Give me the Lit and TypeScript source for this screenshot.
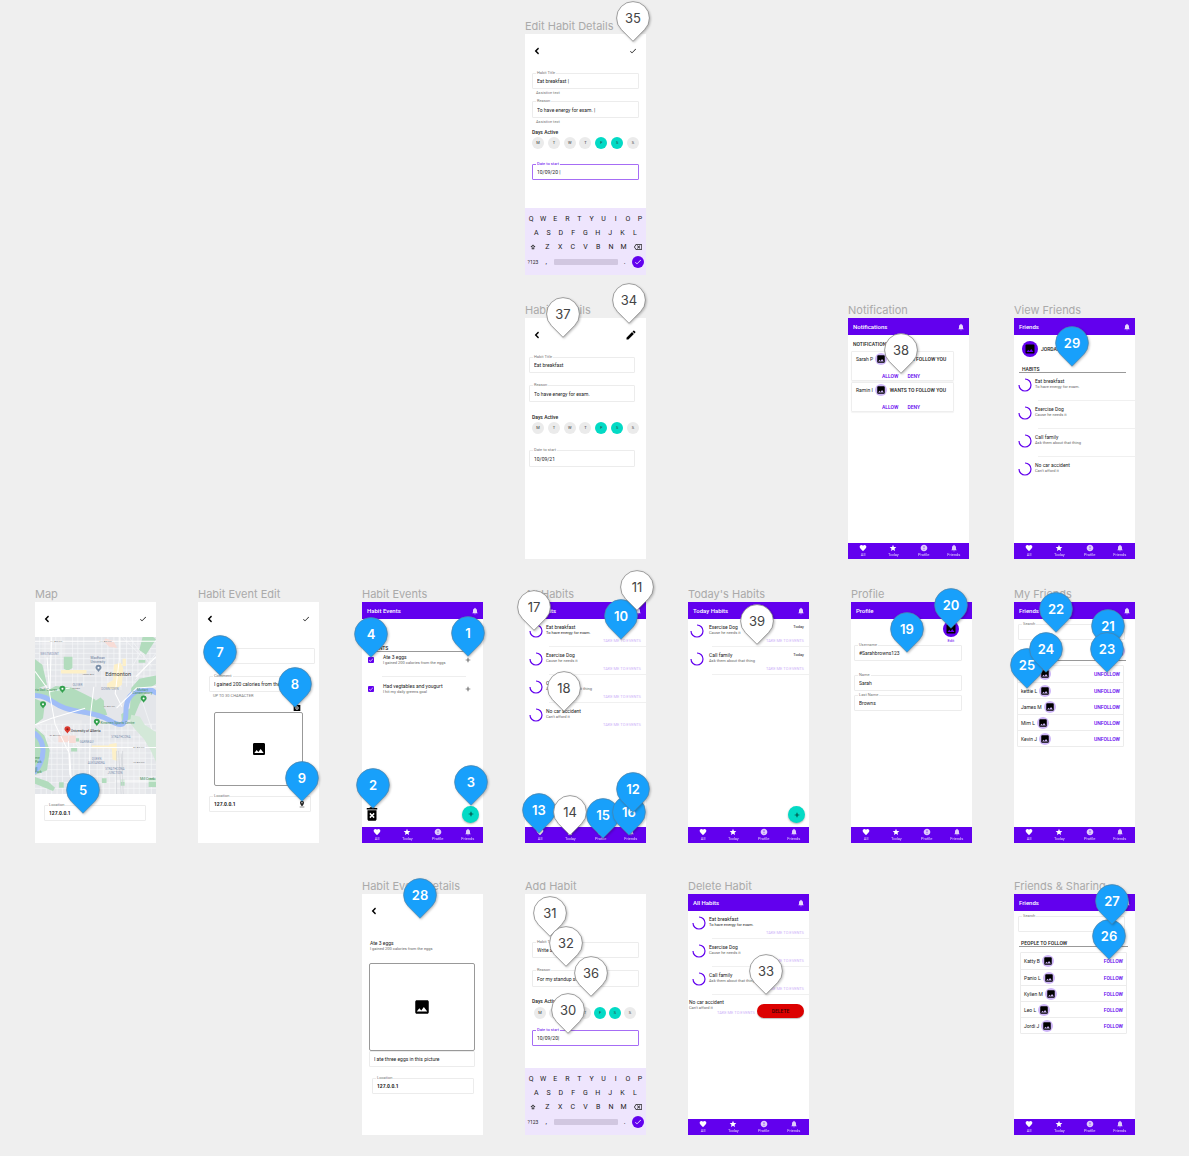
import { LitElement, html, svg, css, nothing } from "lit";
import type { TemplateResult } from "lit";
import { customElement } from "lit/decorators.js";
import { classMap } from "lit/directives/class-map.js";

const ICONS: Record<string, string> = {
  back: "M16 7.41 14.200 5.200 7.400 12l6.800 6.800L16 16.590 11.400 12z",
  check: "M9 16.17 4.83 12l-1.42 1.41L9 19 21 7l-1.41-1.41z",
  add: "M19 13h-6v6h-2v-6H5v-2h6V5h2v6h6z",
  edit: "M3 17.25V21h3.75L17.81 9.94l-3.75-3.75L3 17.25zM20.71 7.04c.39-.39.39-1.02 0-1.41l-2.34-2.34c-.39-.39-1.02-.39-1.41 0l-1.83 1.83 3.75 3.75 1.83-1.83z",
  bell: "M12 22c1.1 0 2-.9 2-2h-4c0 1.1.89 2 2 2zm6-6v-5c0-3.07-1.64-5.64-4.5-6.32V4c0-.83-.67-1.5-1.5-1.5s-1.5.67-1.5 1.5v.68C7.63 5.36 6 7.92 6 11v5l-2 2v1h16v-1l-2-2z",
  heart: "M12 21.35l-1.45-1.32C5.4 15.36 2 12.28 2 8.5 2 5.42 4.42 3 7.5 3c1.74 0 3.41.81 4.5 2.09C13.09 3.81 14.76 3 16.5 3 19.58 3 22 5.42 22 8.5c0 3.78-3.4 6.86-8.55 11.54L12 21.35z",
  star: "M12 17.27 18.18 21l-1.64-7.03L22 9.24l-7.19-.61L12 2 9.19 8.63 2 9.24l5.46 4.73L5.82 21z",
  alert: "M12 2C6.48 2 2 6.48 2 12s4.48 10 10 10 10-4.48 10-10S17.52 2 12 2zm1 15h-2v-2h2v2zm0-4h-2V7h2v6z",
  image: "M21 19V5c0-1.1-.9-2-2-2H5c-1.1 0-2 .9-2 2v14c0 1.1.9 2 2 2h14c1.1 0 2-.9 2-2zM8.5 13.5l2.5 3.01L14.5 12l4.5 6H5l3.5-4.5z",
  trash: "M6 19c0 1.1.9 2 2 2h8c1.1 0 2-.9 2-2V7H6v12zm2.46-7.12 1.41-1.41L12 12.59l2.12-2.12 1.41 1.41L13.41 14l2.12 2.12-1.41 1.41L12 15.41l-2.12 2.12-1.41-1.41L10.59 14l-2.13-2.12zM15.5 4l-1-1h-5l-1 1H5v2h14V4z",
  camera: "M2 3h6l1-1h6l1 1h6v18H2zM12 7a5 5 0 1 0 0 10 5 5 0 0 0 0-10zm0 2.500a2.500 2.500 0 1 1 0 5 2.500 2.500 0 0 1 0-5z",
  place: "M18 8c0-3.31-2.69-6-6-6S6 4.690 6 8c0 4.500 6 11 6 11s6-6.500 6-11zm-8 0c0-1.100.900-2 2-2s2 .900 2 2-.890 2-2 2c-1.100 0-2-.900-2-2zM5 20v2h14v-2H5z",
  shift: "M12 2 2 12h5v9h10v-9h5zM12 6l4 4h-2v8h-4v-8H8z",
  erase: "M22 3H7c-.690 0-1.230.350-1.590.880L0 12l5.410 8.110c.360.530.900.890 1.590.890h15c1.100 0 2-.900 2-2V5c0-1.100-.900-2-2-2zm0 16H7.070L2.400 12l4.660-7H22v14zm-11.590-2L14 13.410 17.590 17 19 15.590 15.410 12 19 8.410 17.590 7 14 10.590 10.410 7 9 8.410 12.590 12 9 15.590z",
};

const icon = (name: string, size = "") => html`
  <svg class="icon ${size}" viewBox="0 0 24 24" aria-hidden="true">${svg`<path d=${ICONS[name]}></path>`}</svg>
`;

const iconButton = (name: string, label: string, size = "") => html`
  <button class="plain" type="button" aria-label=${label}>${icon(name, size)}</button>
`;

interface FieldOptions {
  label?: string;
  value?: string;
  kind?: string;
}

const field = (id: string, { label = "", value = "", kind = "" }: FieldOptions) => html`
  <div class="field ${kind}">
    ${label ? html`<label for=${id}>${label}</label>` : nothing}
    <input id=${id} type="text" .value=${value} aria-label=${label || id} />
    ${kind.includes("with-place") ? icon("place", "s8") : nothing}
  </div>
`;

const appBar = (title: string, bell = true) => html`
  <header class="app-bar">
    <span>${title}</span>
    ${bell ? iconButton("bell", "Notifications", "s8") : nothing}
  </header>
`;

const plainBar = (action = "") => html`
  <header class="plain-bar">
    ${iconButton("back", "Back", "s12")}
    ${action ? iconButton(action, action, action === "edit" ? "s12" : "s8") : nothing}
  </header>
`;

const NAV = [
  ["heart", "All"],
  ["star", "Today"],
  ["alert", "Profile"],
  ["bell", "Friends"],
];

const navBar = () => html`
  <nav class="nav-bar">
    ${NAV.map(
      ([glyph, label], i) => html`
        <button class=${classMap({ plain: true, dim: i > 1 })} type="button">
          ${icon(glyph, "s8")}<span>${label}</span>
        </button>
      `,
    )}
  </nav>
`;

const ring = () => html`
  <svg class="ring" viewBox="0 0 14 14" aria-hidden="true">
    ${svg`<path d="M7 1A6 6 0 1 1 1 7"></path>`}
  </svg>
`;

interface Habit {
  title: string;
  note: string;
  link?: boolean;
  today?: boolean;
  strong?: boolean;
}

const habitRow = (habit: Habit) => html`
  <li class="habit">
    ${ring()}
    <div class="habit-text">
      <p class="title">${habit.title}</p>
      <p class=${classMap({ note: true, strong: !!habit.strong })}>${habit.note}</p>
    </div>
    <div class="habit-side">
      <span>${habit.today ? "Today" : ""}</span>
      ${habit.link ? html`<a class="events-link" href="#events">TAKE ME TO EVENTS</a>` : nothing}
    </div>
  </li>
`;

const HABITS: Habit[] = [
  { title: "Eat breakfast", note: "To have energy for exam." },
  { title: "Exercise Dog", note: "Cause he needs it" },
  { title: "Call family", note: "Ask them about that thing" },
  { title: "No car accident", note: "Can't afford it" },
];

const days = () => html`
  <p class="days-title">Days Active</p>
  <div class="days">
    ${["M", "T", "W", "T", "F", "S", "S"].map(
      (d, i) => html`<button class=${classMap({ day: true, on: i === 4 || i === 5 })} type="button">${d}</button>`,
    )}
  </div>
`;

interface HabitFormData {
  id: string;
  variant: string;
  title: string;
  reason: string;
  date: string;
  helper?: boolean;
  focus?: boolean;
}

const habitForm = (f: HabitFormData) => html`
  <form class="form ${f.variant}">
    <div class="block">
      ${field(`${f.id}-title`, { label: "Habit Title", value: f.title })}
      ${f.helper ? html`<p class="helper">Assistive text</p>` : nothing}
    </div>
    <div class="block second">
      ${field(`${f.id}-reason`, { label: "Reason", value: f.reason, kind: "tall" })}
      ${f.helper ? html`<p class="helper">Assistive text</p>` : nothing}
    </div>
    ${days()}
    <div class="date">
      ${field(`${f.id}-date`, { label: "Date to start", value: f.date, kind: f.focus ? "focus" : "tall" })}
    </div>
  </form>
`;

const keyRow = (letters: string) =>
  [...letters].map((c) => html`<button class="key" type="button">${c}</button>`);

const keyboard = () => html`
  <div class="keyboard">
    <div class="keys">${keyRow("QWERTYUIOP")}</div>
    <div class="keys inset">${keyRow("ASDFGHJKL")}</div>
    <div class="keys">
      <button class="key wide" type="button" aria-label="Shift">${icon("shift", "s6")}</button>
      ${keyRow("ZXCVBNM")}
      <button class="key wide" type="button" aria-label="Delete">${icon("erase", "s8")}</button>
    </div>
    <div class="keys last">
      <button class="key small" type="button">?123</button>
      <button class="key" type="button">,</button>
      <button class="key space" type="button" aria-label="Space"></button>
      <button class="key" type="button">.</button>
      <button class="key done" type="button" aria-label="Done">${icon("check", "s8")}</button>
    </div>
  </div>
`;

const avatar = (kind = "") => html`<span class="avatar ${kind}">${icon("image", kind ? "s12" : "s10")}</span>`;

const people = (names: string[], action: string, kind = "") => html`
  <ul class="people ${kind}">
    ${names.map(
      (n) => html`
        <li class="person">
          <span>${n}</span>${avatar()}
          <button class="plain caps violet" type="button">${action}</button>
        </li>
      `,
    )}
  </ul>
`;

const request = (name: string) => html`
  <article class="request">
    <div class="request-top"><span>${name}</span>${avatar()}<b class="caps">WANTS TO FOLLOW YOU</b></div>
    <div class="request-actions">
      <button class="plain caps violet" type="button">ALLOW</button>
      <button class="plain caps violet" type="button">DENY</button>
    </div>
  </article>
`;

const fab = () => html`<button class="fab" type="button" aria-label="Add">${icon("add", "s8")}</button>`;

const eventRow = (id: string, title: string, note: string) => html`
  <li class="event">
    <span class="tick"><input type="checkbox" id=${id} checked />${icon("check", "s6")}</span>
    <label class="event-text" for=${id}><span class="title">${title}</span><span class="note">${note}</span></label>
    ${iconButton("add", "Add", "s8")}
  </li>
`;

/* City map, drawn three units to the pixel. */
const MINOR_V = [14, 30, 46, 62, 78, 112, 128, 146, 182, 200, 218, 236, 256, 274, 292, 308, 326, 344];
const MINOR_H = [22, 36, 50, 66, 84, 100, 118, 136, 262, 280, 300, 318, 348, 364, 382, 398, 418, 436, 454];
const LABELS: [number, number, string, string][] = [
  [16, 54, "area", "WESTMOUNT"],
  [166, 68, "poi", "MacEwan"],
  [166, 79, "poi", "University"],
  [112, 148, "area", "OLIVER"],
  [198, 160, "area", "DOWNTOWN"],
  [0, 162, "park", "ria Golf Course"],
  [305, 162, "park", "Muttart"],
  [292, 173, "park", "Conservatory"],
  [196, 261, "park", "Kinsmen Sports Centre"],
  [228, 304, "area", "STRATHCONA"],
  [134, 318, "area", "GARNEAU"],
  [170, 369, "area", "QUEEN"],
  [158, 380, "area", "ALEXANDRA"],
  [210, 400, "area", "STRATHCONA"],
  [218, 411, "area", "JUNCTION"],
  [314, 430, "park", "Mill Creek"],
  [0, 366, "park", "me"],
  [0, 377, "park", "Park"],
  [0, 398, "park", "ill"],
  [0, 409, "park", "Park"],
  [44, 16, "road", "111 Ave NW"],
  [192, 16, "road", "111 Ave NW"],
  [142, 114, "road", "Jasper Ave"],
  [110, 156, "road", "100 Ave"],
  [206, 211, "road", "97 Ave NW"],
  [44, 296, "road", "87 Ave NW"],
  [294, 334, "road", "82 Ave NW"],
  [294, 379, "road", "76 Ave NW"],
];
const marker = (x: number, y: number, kind: string) =>
  svg`<path class=${kind} d="M${x} ${y + 11}C${x - 3} ${y + 5} ${x - 9} ${y + 3} ${x - 9} ${y - 2}A9 9 0 1 1 ${x + 9} ${y - 2}C${x + 9} ${y + 3} ${x + 3} ${y + 5} ${x} ${y + 11}Z"></path>
    <circle cx=${x} cy=${y - 2} r="3" class="hole ${kind}"></circle>`;

const cityMap = () => html`
  <svg class="map" viewBox="0 0 362 472" preserveAspectRatio="xMidYMid slice" role="img" aria-label="Map of Edmonton">
    ${svg`
      <rect class="land" width="362" height="472"></rect>
      <g class="pale">
        <path d="M0 250H140V340H0zM190 310H330V470H190zM20 0H90V60H20zM200 90H260V160H200z"></path>
      </g>
      <g class="minor">
        ${MINOR_V.map((x) => svg`<path d="M${x} 0V150M${x + 4} 262V472"></path>`)}
        ${MINOR_H.map((y) => svg`<path d="M0 ${y}H362"></path>`)}
        <path d="M260 0l60 60M280 0l70 90M300 130l62-80M320 190l30 90M340 10l-50 80M90 270l40 60M0 260l60 60"></path>
      </g>
      <g class="green">
        <path d="M322 0h30l10 8-30 46-20-14z"></path>
        <path d="M86 60h26v34l-14 8-12-6z"></path>
        <path d="M0 68l22 16 14 60-36 14z"></path>
        <path d="M0 152l40 8 22-12 46 4 40 20 32 16 10 24 20 4 6 18-30 8-70-16-46-24-30-20-44-10z"></path>
        <path d="M174 196l22-14 10 10 2 40-22 12-12-14z"></path>
        <path d="M258 232l26-18 4-60 24-28 50-10v26l-26 16-24 44-18 44-34 8z"></path>
        <path d="M0 186l30 12-6 46-24 20zM0 272l28 24 16 44-8 60-36 14z"></path>
        <path d="M0 420l40 14 20 18-6 10-54-22z"></path>
        <path d="M108 330h18v14h-18zM122 304h10v10h-10zM72 436h14v16H72zM200 424h14v14h-14zM256 428h12v18h-12zM154 444h8v12h-8zM340 424h22v26h-22zM310 70h20v8h-20z"></path>
      </g>
      <path class="ravine" d="M288 234l26 6 14 24 34 22v88l-16-34-20-34-24-26-18-22z"></path>
      <g class="yellow">
        <path d="M78 100h76v10H78zM236 84l20-6 8 16-4 50-20 14-24-4v-14l18-10zM262 66h10v22h-10zM222 322l22-4 2 54-14-4-2-32-8-4zM170 326h72v8h-72z"></path>
      </g>
      <g class="pink">
        <path d="M210 6l24 6 12 22-24-4-16-16zM102 296h20v22h-20zM70 296h30v20H70z"></path>
      </g>
      <g class="river">
        <path d="M0 176c44 2 50 24 90 38s90 10 132 36 50 12 50-24 14-62 50-66 30 6 40 8"></path>
        <path d="M0 290c30 24 34 72 0 114"></path>
      </g>
      <g class="major">
        <path d="M0 14H362M0 332H362M36 62l8 110 16 90 44 90 4 70M176 150l-10 84-4 238M50 0l-6 172M100 312l4 100 30 60M252 0v70l-12 100 20 40M0 104l44 60 60-10M150 214l-100 30-50 20M244 214l60-60 58-4M362 60l-60 60M362 432H240"></path>
      </g>
      <g class="rail"><path d="M244 342v130M250 342l8 130M258 350l6 122M262 342v60"></path></g>
      ${LABELS.map(([x, y, kind, text]) => svg`<text class=${kind} x=${x} y=${y}>${text}</text>`)}
      <text class="city" x="210" y="118">Edmonton</text>
      ${marker(82, 158, "go")}${marker(24, 204, "go")}${marker(185, 257, "go")}${marker(325, 187, "go")}
      ${marker(190, 95, "school")}${marker(97, 279, "red")}
      <text class="uni" x="107" y="286">University of Alberta</text>
    `}
  </svg>
`;

interface Board {
  title: string;
  x: number;
  y: number;
  body: () => TemplateResult;
}

const BOARDS: Board[] = [
  {
    title: "Edit Habit Details", x: 525, y: 34,
    body: () => html`${plainBar("check")}
      ${habitForm({ id: "edit", variant: "edit", title: "Eat breakfast |", reason: "To have energy for exam. |", date: "10/09/20 |", helper: true, focus: true })}
      ${keyboard()}`,
  },
  {
    title: "Habit Details", x: 525, y: 318,
    body: () => html`${plainBar("edit")}
      ${habitForm({ id: "view", variant: "view", title: "Eat breakfast", reason: "To have energy for exam.", date: "10/09/21" })}`,
  },
  {
    title: "Notification", x: 848, y: 318,
    body: () => html`${appBar("Notifications")}
      <h3 class="caps requests-title">NOTIFICATIONS</h3>
      <div class="requests">${request("Sarah P")}${request("Ramin I")}</div>
      ${navBar()}`,
  },
  {
    title: "View Friends", x: 1014, y: 318,
    body: () => html`${appBar("Friends")}
      <div class="friend-head">${avatar("solid")}<b class="caps">JORDAN</b></div>
      <h3 class="caps ruled">HABITS</h3>
      <ul class="habits">${HABITS.map(habitRow)}</ul>
      ${navBar()}`,
  },
  {
    title: "Map", x: 35, y: 602,
    body: () => html`${plainBar("check")}${cityMap()}
      <div class="map-field">${field("map-location", { label: "Location", value: "127.0.0.1", kind: "bold" })}</div>`,
  },
  {
    title: "Habit Event Edit", x: 198, y: 602,
    body: () => html`${plainBar("check")}
      <div class="event-edit">
        ${field("event-name", {})}
        <div class="comment">
          ${field("event-comment", { label: "Comment", value: "I gained 200 calories from the eggs" })}
          <p class="helper">UP TO 30 CHARACTER</p>
        </div>
        ${iconButton("camera", "Take a photo", "s8")}
        <div class="photo">${icon("image", "s16")}</div>
        ${field("event-location", { label: "Location", value: "127.0.0.1", kind: "bold with-place" })}
      </div>`,
  },
  {
    title: "Habit Events", x: 362, y: 602,
    body: () => html`${appBar("Habit Events")}
      <h3 class="caps ruled events-title">EVENTS</h3>
      <ul class="events">
        ${eventRow("event-1", "Ate 3 eggs", "I gained 200 calories from the eggs")}
        ${eventRow("event-2", "Had vegtables and yougurt", "I hit my daily greens goal")}
      </ul>
      <div class="actions">${iconButton("trash", "Delete", "s18")}${fab()}</div>
      ${navBar()}`,
  },
  {
    title: "All Habits", x: 525, y: 602,
    body: () => html`${appBar("All Habits")}
      <ul class="habits">${HABITS.map((h, i) => habitRow({ ...h, link: true, strong: i === 0 }))}</ul>
      ${navBar()}`,
  },
  {
    title: "Today's Habits", x: 688, y: 602,
    body: () => html`${appBar("Today Habits")}
      <ul class="habits near">${HABITS.slice(1, 3).map((h) => habitRow({ ...h, link: true, today: true }))}</ul>
      <div class="actions">${fab()}</div>
      ${navBar()}`,
  },
  {
    title: "Profile", x: 851, y: 602,
    body: () => html`${appBar("Profile", false)}
      <div class="profile">
        <div class="portrait">${avatar("solid")}<button class="plain violet" type="button">Edit</button></div>
        ${field("username", { label: "Username", value: "#Sarahbrowns123" })}
        <div class="names">
          ${field("first-name", { label: "Name", value: "Sarah" })}
          ${field("last-name", { label: "Last Name", value: "Browns" })}
        </div>
      </div>
      ${navBar()}`,
  },
  {
    title: "My Friends", x: 1014, y: 602,
    body: () => html`${appBar("Friends")}
      <div class="search">${field("search-friends", { label: "Search" })}</div>
      <div class="me">${avatar()}</div>
      ${people(["Katty B", "kettie L", "James M", "Mim L", "Kevin J"], "UNFOLLOW")}
      ${navBar()}`,
  },
  {
    title: "Habit Event Details", x: 362, y: 894,
    body: () => html`${plainBar()}
      <div class="event-details">
        <p class="title">Ate 3 eggs</p>
        <p class="note">I gained 200 calories from the eggs</p>
        <div class="photo large">${icon("image", "s18")}</div>
        ${field("caption", { value: "I ate three eggs in this picture" })}
        <div class="place-field">${field("details-location", { label: "Location", value: "127.0.0.1", kind: "bold" })}</div>
      </div>`,
  },
  {
    title: "Add Habit", x: 525, y: 894,
    body: () => html`<div class="plain-bar"></div>
      ${habitForm({ id: "add", variant: "add", title: "Write a book", reason: "For my standup skills", date: "10/09/20|", focus: true })}
      ${keyboard()}`,
  },
  {
    title: "Delete Habit", x: 688, y: 894,
    body: () => html`${appBar("All Habits")}
      <ul class="habits">
        ${HABITS.slice(0, 3).map((h, i) => habitRow({ ...h, link: true, strong: i === 0 }))}
        <li class="removing">
          <div>
            <p class="title">No car accident</p>
            <p class="note">Can't afford it</p>
            <a class="events-link" href="#events">TAKE ME TO EVENTS</a>
          </div>
          <button class="delete" type="button">DELETE</button>
        </li>
      </ul>
      ${navBar()}`,
  },
  {
    title: "Friends & Sharing", x: 1014, y: 894,
    body: () => html`${appBar("Friends")}
      <div class="search">${field("search-people", { label: "Search" })}</div>
      <h3 class="caps ruled people-title">PEOPLE TO FOLLOW</h3>
      ${people(["Katty B", "Panio L", "Kylien M", "Leo L", "Jordi J"], "FOLLOW", "follow")}
      ${navBar()}`,
  },
];

/* number, centre x, centre y, tone */
type Tone = "white" | "blue";
const PINS: [number, number, number, Tone][] = [
  [35, 633, 18, "white"], [34, 629, 300, "white"], [37, 563, 314, "white"], [38, 901, 350, "white"],
  [29, 1072, 343, "blue"], [5, 83, 790, "blue"], [7, 220, 652, "blue"], [8, 295, 684, "blue"],
  [9, 302, 778, "blue"], [4, 371, 634, "blue"], [1, 468, 633, "blue"], [2, 373, 785, "blue"],
  [3, 471, 782, "blue"], [17, 534, 607, "white"], [10, 621, 616, "blue"], [11, 637, 587, "white"],
  [18, 564, 688, "white"], [13, 539, 810, "blue"], [14, 570, 812, "white"], [15, 603, 815, "blue"],
  [16, 629, 812, "blue"], [12, 633, 789, "blue"], [39, 757, 621, "white"], [19, 907, 629, "blue"],
  [20, 951, 605, "blue"], [22, 1056, 609, "blue"], [21, 1108, 626, "blue"], [23, 1107, 649, "blue"],
  [25, 1027, 665, "blue"], [24, 1046, 649, "blue"], [28, 420, 895, "blue"], [31, 550, 913, "white"],
  [32, 566, 943, "white"], [36, 591, 973, "white"], [30, 568, 1010, "white"], [33, 766, 971, "white"],
  [26, 1109, 936, "blue"], [27, 1112, 901, "blue"],
];

@customElement("comment-pin")
export class CommentPin extends LitElement {
  static properties = { number: { type: Number }, tone: { type: String } };
  declare number: number;
  declare tone: Tone;

  static styles = css`
    :host { display: block; width: 34px; height: 42px; }
    button {
      display: grid; width: 34px; height: 42px; padding: 0; border: 0; background: none;
      font: 400 13px/34px Inter, "Liberation Sans", sans-serif; color: #444; cursor: pointer;
    }
    .blue { font-weight: 600; color: #fff; }
    svg, span { grid-area: 1 / 1; }
    svg { width: 34px; height: 42px; overflow: visible; filter: drop-shadow(1px 1px 1px rgb(0 0 0 / 25%)); }
    span { position: relative; text-align: center; }
    path { fill: #fff; stroke: #777; stroke-width: .7; }
    .blue path { fill: #18a0fb; stroke: #4d82a8; }
  `;

  render() {
    return html`
      <button class=${this.tone} type="button">
        <svg viewBox="0 0 34 42" aria-hidden="true">${svg`<path d="M17 40.300L5.400 28.600A16.400 16.400 0 1 1 28.600 28.600Z"></path>`}</svg>
        <span>${this.number}</span>
      </button>
    `;
  }
}

@customElement("app-root")
export class AppRoot extends LitElement {
  static styles = css`
    :host { display: block; }
    * { box-sizing: border-box; }
    p, h2, h3, ul { margin: 0; padding: 0; }
    li { list-style: none; }
    button, input { font: inherit; color: inherit; margin: 0; border-radius: 0; }
    .canvas {
      position: relative; min-height: 100vh; overflow: hidden; background: #efefef;
      font: 400 5px/6px Roboto, "Liberation Sans", sans-serif; color: #222;
    }
    .board { position: absolute; display: grid; grid-template-rows: 16px 241px; width: 121px; }
    .board h2 { font: 400 11px/16px Inter, "Liberation Sans", sans-serif; color: #aaa; white-space: nowrap; }
    .screen { display: flex; flex-direction: column; background: #fff; overflow: hidden; }
    comment-pin { position: absolute; }

    .icon { display: block; flex: none; width: 8px; height: 8px; fill: currentColor; fill-rule: evenodd; }
    .s6 { width: 6px; height: 6px; }
    .s10 { width: 10px; height: 10px; }
    .s12 { width: 12px; height: 12px; }
    .s16 { width: 16px; height: 16px; }
    .s18 { width: 18px; height: 18px; }
    .plain { display: block; padding: 0; border: 0; background: none; cursor: pointer; }
    .caps { font-weight: 500; font-size: 5px; }
    .violet { color: #6200ee; }

    .app-bar {
      display: flex; flex: none; align-items: center; justify-content: space-between; height: 17px;
      padding: 0 4px 0 5px; background: #6200ee; color: #fff; font-weight: 500; font-size: 6px;
    }
    .app-bar button { opacity: .85; }
    .plain-bar { display: flex; flex: none; align-items: center; justify-content: space-between; height: 34px; padding: 0 9px 0 6px; color: #000; }
    .nav-bar { display: grid; flex: none; grid-template-columns: repeat(4, 1fr); height: 16px; margin-top: auto; background: #6200ee; color: #fff; }
    .nav-bar button { display: flex; flex-direction: column; align-items: center; padding-top: 1px; font-size: 4px; line-height: 5px; }
    .nav-bar span { opacity: .8; }
    .dim .icon { opacity: .8; }

    .field { position: relative; display: flex; align-items: center; height: 16px; border: 1px solid #ececec; border-radius: 1px; padding: 0 4px; }
    .field.tall { height: 17px; }
    .field input { flex: 1; min-width: 0; width: 100%; padding: 0; border: 0; background: none; outline: none; line-height: 8px; }
    .field label { position: absolute; top: -4px; left: 3px; padding: 0 1px; background: #fff; font-size: 4px; color: #777; }
    .field.focus { border-color: #a66df5; }
    .field.focus label { color: #6200ee; }
    .field.bold input { font-weight: 700; }
    .helper { padding: 1px 4px; font-size: 4px; line-height: 5px; color: #777; }

    .form { --left: 7px; --right: 7px; --days-left: 7px; --days-right: 7px; --days-top: 1px; --top: 5px; --second: 28px; --date: 15px; padding-top: var(--top); }
    .form.view { --left: 4px; --right: 11px; --date: 16px; --second: 29px; }
    .form.add { --top: 14px; --date: 11px; --days-left: 9px; --days-right: 10px; --days-top: 2px; }
    .block, .date { padding: 0 var(--right) 0 var(--left); }
    .block { height: 28px; }
    .block.second { height: var(--second); }
    .days-title { padding: 0 7px; font-weight: 500; line-height: 7px; }
    .days { display: flex; justify-content: space-between; padding: var(--days-top) var(--days-right) 0 var(--days-left); }
    .day { width: 12px; height: 12px; padding: 0; border: 0; border-radius: 6px; background: #ebebeb; font-size: 4px; line-height: 12px; color: #333; }
    .day.on { background: #03dac5; }
    .date { padding-top: var(--date); }

    .keyboard { flex: none; height: 67px; margin-top: auto; padding-top: 4px; background: #eee5fd; }
    .keys { display: flex; align-items: center; height: 14px; }
    .keys.inset { padding: 0 5px; }
    .key { display: grid; place-items: center; flex: 1; padding: 0; border: 0; background: none; font-size: 7px; line-height: 14px; text-align: center; }
    .key.wide { flex: none; width: 16px; }
    .keys.last { height: 15px; padding: 0 2px; }
    .key.small { flex: none; width: 12px; font-size: 5px; }
    .key.space { flex: none; width: 64px; height: 6px; border-radius: 1px; background: #d1c7e0; }
    .key.done { flex: none; width: 12px; height: 12px; border-radius: 6px; background: #6200ee; color: #fff; }

    .requests-title { padding: 6px 5px 4px; }
    .requests { display: grid; gap: 1px; width: 103px; margin-left: 3px; }
    .request { height: 30px; border: 1px solid #eee; border-radius: 1px; padding: 1px 4px 0; box-shadow: 0 1px 1px #f4f4f4; }
    .request-top { display: flex; align-items: center; gap: 3px; white-space: nowrap; }
    .request-top .avatar { margin-left: -1px; }
    .request-actions { display: flex; gap: 9px; padding: 8px 0 0 26px; }

    .avatar { display: grid; flex: none; place-items: center; width: 12px; height: 12px; border-radius: 6px; background: #ceb6f8; color: #000; }
    .avatar.solid { width: 16px; height: 16px; border-radius: 8px; background: #6200ee; }

    .friend-head { display: flex; align-items: center; gap: 3px; padding: 6px 8px 10px; }
    .ruled { margin: 0 9px 0 5px; padding: 0 3px; border-bottom: 1px solid #999; line-height: 5px; }
    .habit { position: relative; display: flex; height: 28px; padding: 5px 5px 0 4px; gap: 3px; }
    .habit:not(:last-child)::after, .near .habit::after { content: ""; position: absolute; right: 0; bottom: 0; left: 24px; height: 1px; background: #f0f0f0; }
    .near .habit { padding-left: 2px; gap: 5px; }
    .ring { flex: none; width: 14px; height: 14px; fill: none; stroke: #6200ee; stroke-width: 1.2; }
    .habit-text { white-space: nowrap; }
    .note { font-size: 4px; color: #666; }
    .note.strong { color: #222; }
    .habit-side { display: flex; flex: 1; flex-direction: column; justify-content: space-between; align-items: flex-end; width: 0; padding-bottom: 4px; font-size: 4px; white-space: nowrap; }
    .events-link { font-size: 4px; line-height: 5px; color: #cdb2f8; text-decoration: none; white-space: nowrap; }
    .habit-side .events-link { margin-left: -40px; }
    .removing { display: flex; align-items: flex-start; justify-content: space-between; padding: 4px 5px 0 1px; white-space: nowrap; }
    .removing .events-link { display: block; padding-left: 28px; line-height: 4px; }
    .delete { width: 47px; height: 14px; margin: 5px 0 0 -20px; padding: 0; border: 0; border-radius: 7px; background: #dc0000; font-weight: 500; color: #300; box-shadow: 0 1px 1px rgb(0 0 0 / 25%); }

    .map { display: block; flex: none; width: 100%; height: 157px; margin-top: 1px; }
    .map text { font: 400 9px Roboto, sans-serif; fill: #667; }
    .map .land { fill: #e4e6ea; }
    .map .pale { fill: #e9eaed; }
    .map .minor { fill: none; stroke: #f6f7f9; stroke-width: 2; }
    .map .major { fill: none; stroke: #fff; stroke-width: 3; }
    .map .rail { fill: none; stroke: #cfd2d7; stroke-width: 2; }
    .map .green { fill: #b2dcbd; }
    .map .ravine { fill: #d3e8d8; }
    .map .yellow { fill: #fdf0c8; }
    .map .pink { fill: #f8dcd6; }
    .map .river { fill: none; stroke: #a0bdf7; stroke-width: 15; stroke-linecap: round; }
    .map .go { fill: #34a04f; }
    .map .school { fill: #7b8fa8; }
    .map .red { fill: #dc3b30; }
    .map .hole { fill: #fff; }
    .map .hole.red { fill: #8c1a14; }
    .map text.area { fill: #7d8fae; }
    .map text.park { fill: #3f8a55; font-size: 10px; }
    .map text.poi { fill: #5f7596; font-size: 10px; }
    .map text.road { fill: #777; font-size: 7px; }
    .map text.city { fill: #444; font-size: 17px; }
    .map text.uni { fill: #222; font-size: 10px; }
    .map-field { padding: 11px 10px 0 9px; }

    .event-edit { display: flex; flex-direction: column; align-items: stretch; padding: 12px 8px 0 11px; }
    .event-edit > .field:first-child { margin-right: -4px; }
    .comment { height: 29px; margin-top: 12px; padding-right: 0; }
    .event-edit > button { align-self: flex-end; margin: -1px 10px 0 0; color: #000; }
    .photo { display: grid; place-items: center; height: 74px; margin: 0 8px 10px 5px; border: 1px solid #999; border-radius: 2px; color: #000; }
    .photo.large { height: 88px; margin: 11px 0 0; }

    .events-title { margin: 27px 16px 0 5px; }
    .event { display: grid; grid-template-columns: 12px 1fr 8px; align-items: center; height: 24px; padding: 0 11px 9px 6px; }
    .event + .event { height: 29px; padding-top: 4px; border-top: 1px solid; border-image: linear-gradient(90deg, transparent 21px, #eee 21px, #eee 103px, transparent 103px) 1; }
    .tick { display: grid; width: 6px; height: 6px; }
    .tick > * { grid-area: 1 / 1; }
    .tick input { width: 6px; height: 6px; appearance: none; border-radius: 1px; background: #6200ee; }
    .tick svg { z-index: 1; fill: #fff; pointer-events: none; }
    .event-text { display: grid; padding-left: 3px; white-space: nowrap; }
    .actions { display: flex; align-items: center; margin-top: auto; padding: 0 4px 4px 1px; color: #000; }
    .actions + .nav-bar { margin-top: 0; }
    .fab { display: grid; place-items: center; width: 17px; height: 17px; margin-left: auto; padding: 0; border: 0; border-radius: 9px; background: #03dac5; box-shadow: 0 1px 2px rgb(0 0 0 / 30%); }

    .profile { padding: 2px 10px 0 3px; }
    .portrait { display: flex; flex-direction: column; align-items: center; gap: 1px; width: 16px; height: 24px; margin-left: 89px; font-size: 4px; }
    .names { display: grid; gap: 4px; padding-top: 14px; }

    .search { padding: 5px 10px 0 4px; }
    .me { display: flex; justify-content: flex-end; height: 17px; margin: 4px 9px 4px 8px; padding: 1px 1px 0 0; border-bottom: 1px solid #999; }
    .people { margin: 0 11px 0 3px; border: 1px solid #ececec; border-radius: 1px; }
    .people.follow { margin: 5px 8px 0 6px; }
    .people-title { margin-top: 9px; margin-right: 7px; padding: 0 2px; }
    .person { display: flex; align-items: center; gap: 2px; height: 16px; padding: 0 3px; }
    .person + .person { border-top: 1px solid #ececec; }
    .person button { margin-left: auto; }

    .event-details { padding: 12px 8px 0 7px; }
    .event-details p { padding: 0 1px; }
    .place-field { padding: 11px 1px 0 3px; }
  `;

  render() {
    return html`
      <main class="canvas">
        ${BOARDS.map(
          (b) => html`
            <section class="board" style="left:${b.x}px;top:${b.y - 16}px">
              <h2>${b.title}</h2>
              <div class="screen">${b.body()}</div>
            </section>
          `,
        )}
        ${PINS.map(
          ([n, x, y, tone]) =>
            html`<comment-pin .number=${n} .tone=${tone} style="left:${x - 17}px;top:${y - 17}px"></comment-pin>`,
        )}
      </main>
    `;
  }
}
